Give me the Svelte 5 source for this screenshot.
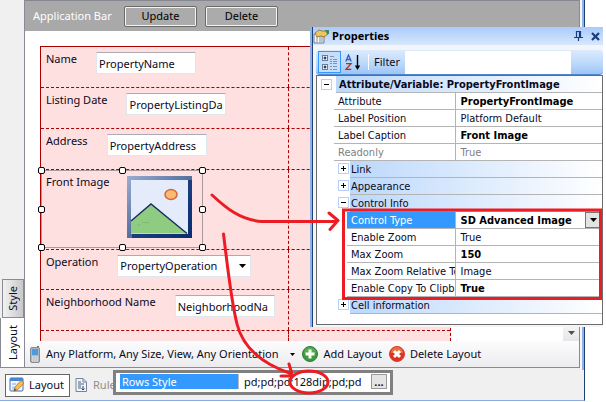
<script>
  const fields = [
    { id: 'name', label: 'Name', value: 'PropertyName' },
    { id: 'listing', label: 'Listing Date', value: 'PropertyListingDa' },
    { id: 'address', label: 'Address', value: 'PropertyAddress' }
  ];

  const general = [
    { label: 'Attribute', value: 'PropertyFrontImage', bold: true },
    { label: 'Label Position', value: 'Platform Default' },
    { label: 'Label Caption', value: 'Front Image', bold: true },
    { label: 'Readonly', value: 'True', muted: true }
  ];

  const control = [
    { label: 'Enable Zoom', value: 'True' },
    { label: 'Max Zoom', value: '150', bold: true },
    { label: 'Max Zoom Relative To', value: 'Image' },
    { label: 'Enable Copy To Clipb', value: 'True', bold: true }
  ];

  const handles = [
    [41, 170], [122, 170], [202, 170],
    [41, 209], [202, 209],
    [41, 247], [122, 247], [202, 247]
  ];
</script>

{#snippet group(title, open)}
  <tr>
    <td></td>
    <td colspan="2">
      <div class="subgroup">
        <button class="toggle" aria-label="Toggle {title}">
          <svg viewBox="0 0 9 9" width="9" height="9"><path d={open ? 'M2 4.5h5' : 'M2 4.5h5M4.5 2v5'} stroke="#000" /></svg>
        </button>
        <div class="sub-title">{title}</div>
      </div>
    </td>
  </tr>
{/snippet}

<div class="screen">
  <div class="window">
    <div class="main">
      <div class="side">
        <button class="side-tab style-tab"><span>Style</span></button>
        <button class="side-tab layout-tab"><span>Layout</span></button>
      </div>
      <div class="designer">
        <header class="appbar">
          <span>Application Bar</span>
          <button>Update</button>
          <button>Delete</button>
        </header>
        <div class="canvas">
          <div class="form">
            {#each fields as f}
              <div class="row">
                <div class="cell">
                  <label for={f.id}>{f.label}</label>
                  <input id={f.id} value={f.value} />
                </div>
                <div></div>
              </div>
            {/each}
            <div class="row image-row">
              <div class="cell">
                <span class="caption">Front Image</span>
                <svg class="picture" viewBox="0 0 65 62" width="65" height="62">
                  <defs>
                    <linearGradient id="frame" x1="0" y1="0" x2="1" y2="1">
                      <stop offset="0" stop-color="#9badd0" />
                      <stop offset=".5" stop-color="#54719f" />
                      <stop offset="1" stop-color="#012a72" />
                    </linearGradient>
                  </defs>
                  <path d="M0 0h65v62H0z" fill="url(#frame)" />
                  <path d="M61 4h4v58H5v-4h56z" fill="#0a2f73" opacity=".75" />
                  <path d="M4 4h57v54H4z" fill="#e4ecfc" />
                  <path d="M4 45 24 28 60 57.500H4z" fill="#8fcb80" />
                  <path d="M4 45 24 28 60 57.500" fill="none" stroke="#16305e" stroke-width="1.400" />
                  <path d="M10 49h4M15 46.500h7" stroke="#7dbb70" />
                  <ellipse cx="44" cy="18.500" rx="6" ry="5" fill="#fbb871" stroke="#d2653a" stroke-width="1.500" />
                </svg>
              </div>
              <div></div>
            </div>
            <div class="row op-row">
              <div class="cell">
                <label for="operation">Operation</label>
                <span class="combo">
                  <select id="operation"><option>PropertyOperation</option></select>
                  <svg viewBox="0 0 7 4" width="7" height="4"><path d="M0 0h7L3.500 4z" /></svg>
                </span>
              </div>
              <div></div>
            </div>
            <div class="row">
              <div class="cell">
                <label for="hood">Neighborhood Name</label>
                <input id="hood" value="NeighborhoodNa" />
              </div>
              <div></div>
            </div>
            <div class="row rest"><div></div><div></div></div>
          </div>
          <div class="scroll">
            <button aria-label="Scroll down">
              <svg viewBox="0 0 7 4" width="7" height="4"><path d="M0 0h7L3.500 4z" fill="#505050" /></svg>
            </button>
          </div>
        </div>
        <div class="toolbar">
          <button>
            <svg viewBox="0 0 12 17" width="12" height="17">
              <rect x="8" y="0" width="2" height="4" fill="#777" />
              <rect x="1.500" y="1.500" width="9" height="15" rx="1.500" fill="#b4b8bd" stroke="#868a91" />
              <rect x="3" y="3" width="6" height="6" fill="#4a9be0" />
              <path d="M3 11h1.500M5.300 11h1.500M7.500 11h1.500M3 13h1.500M5.300 13h1.500M7.500 13h1.500M3 15h1.500M5.300 15h1.500M7.500 15h1.500" stroke="#f4f4f4" />
            </svg>
            <span>Any Platform, Any Size, View, Any Orientation</span>
            <svg class="drop" viewBox="0 0 5 3" width="5" height="3"><path d="M0 0h5L2.500 3z" /></svg>
          </button>
          <button>
            <svg viewBox="0 0 16 16" width="16" height="16">
              <circle cx="8" cy="8" r="7.500" fill="#3d9a3f" stroke="#2b7d35" />
              <path d="M2 7a6 6 0 0 1 12 0z" fill="#67b75f" opacity=".6" />
              <path d="M8 3.500v9M3.500 8h9" stroke="#fff" stroke-width="3" />
            </svg>
            <span>Add Layout</span>
          </button>
          <button>
            <svg viewBox="0 0 16 16" width="16" height="16">
              <circle cx="8" cy="8" r="7.500" fill="#e03223" stroke="#d6402c" />
              <path d="M2 7a6 6 0 0 1 12 0z" fill="#f3874a" opacity=".7" />
              <path d="m5 5 6 6M11 5l-6 6" stroke="#fff" stroke-width="3" />
            </svg>
            <span>Delete Layout</span>
          </button>
        </div>
      </div>
      <div class="gutter"></div>
    </div>
    <footer class="tabs">
      <button class="tab active">
        <svg viewBox="0 0 16 16" width="16" height="16">
          <rect x="1" y="1" width="13" height="13" rx="1" fill="#f4f8fe" stroke="#3a6cb8" />
          <path d="M1 1h13v3H1z" fill="#4b86d6" />
          <path d="M3 6h4v2H3zM3 9.500h3v3H3zM8.500 6H12v2H8.500z" fill="#b4cdf0" />
          <path d="m5 14 1-4 6-6.500 3 2.500-6 6.500z" fill="#f8bd4e" stroke="#b3722a" stroke-width=".8" />
          <path d="m5 14 .8-2.500L7.500 13z" fill="#444" />
        </svg>
        <span>Layout</span>
      </button>
      <button class="tab rules">
        <svg viewBox="0 0 12 14" width="12" height="14">
          <path d="M1 .5h7l3.500 3.500v9.500H1z" fill="#f1f3f8" stroke="#76839e" />
          <path d="M8 .5V4h3.500" fill="none" stroke="#76839e" />
          <path d="M3 4h3M3 6h6M3 8h3M3 10h3" stroke="#4d5f85" />
          <path d="M8 8v4M6.500 10.500 8 12l1.500-1.500" fill="none" stroke="#27406e" />
        </svg>
        <span>Rule</span>
      </button>
    </footer>
  </div>

  <section class="props">
    <header class="props-head">
      <svg viewBox="0 0 16 15" width="16" height="15">
        <path d="M1 5h10v9H1z" fill="#f7f7f7" stroke="#6f7a8c" />
        <path d="M3 8h2M6 8h4M3 10h2M6 10h4M3 12h2M6 12h4" stroke="#7d8fae" />
        <path d="m2 4 4-3 3 1h4l2 3-4 3-3-1-4 1z" fill="#f0c560" stroke="#8a6a24" stroke-width=".8" />
        <path d="M12 1h4v4h-2z" fill="#3f8a58" />
      </svg>
      <h1>Properties</h1>
      <button aria-label="Pin">
        <svg viewBox="0 0 9 10" width="9" height="10"><path d="M2.500 6V.5h4V6M5.500 1v5M0 6.500h9M4.500 7v3" fill="none" stroke="#173f7d" stroke-width="1.200" /></svg>
      </button>
      <button aria-label="Close">
        <svg viewBox="0 0 9 9" width="9" height="9"><path d="m1 1 7 7M8 1 1 8" stroke="#173f7d" stroke-width="2.200" /></svg>
      </button>
    </header>
    <div class="props-tools">
      <button class="categorized" aria-label="Categorized">
        <svg viewBox="0 0 16 17" width="16" height="17">
          <rect x=".5" y="1.500" width="5" height="5" fill="#fff" stroke="#5f7faf" />
          <rect x=".5" y="10.500" width="5" height="5" fill="#fff" stroke="#5f7faf" />
          <path d="M1.500 4h3M3 2.500v3M1.500 13h3M3 11.500v3" stroke="#000" />
          <path d="M8 2.500h4M8 5.500h2M11 5.500h4M8 7.500h2M11 7.500h4M8 9.500h2M11 9.500h4M8 12.500h2M11 12.500h4M8 15.500h2M11 15.500h4" stroke="#7d93b8" />
        </svg>
      </button>
      <button class="sort" aria-label="Sort alphabetically">
        <svg viewBox="0 0 16 17" width="16" height="17">
          <path d="m.8 7.500 2.700-6.500 2.700 6.500M1.800 5.500h3.500" fill="none" stroke="#2c62b8" stroke-width="1.300" />
          <path d="M1 9.600h5L1 15.400h5.200" fill="none" stroke="#a5352b" stroke-width="1.400" />
          <path d="M12.500 1v13" stroke="#000" stroke-width="1.400" />
          <path d="M9.800 11.500h5.400L12.500 16z" />
        </svg>
      </button>
      <label for="filter">Filter</label>
      <input id="filter" />
    </div>
    <div class="sheet">
      <table>
        <colgroup><col class="c-gutter" /><col class="c-label" /><col /></colgroup>
        <tbody>
          <tr>
            <td>
              <button class="toggle top" aria-label="Toggle attribute group">
                <svg viewBox="0 0 9 9" width="9" height="9"><path d="M2 4.500h5" stroke="#000" /></svg>
              </button>
            </td>
            <td colspan="2"><div class="title">Attribute/Variable: PropertyFrontImage</div></td>
          </tr>
          {#each general as r}
            <tr class:muted={r.muted}>
              <td></td>
              <td class="label"><div>{r.label}</div></td>
              <td class="value" class:bold={r.bold}><div>{r.value}</div></td>
            </tr>
          {/each}
          {@render group('Link', false)}
          {@render group('Appearance', false)}
          {@render group('Control Info', true)}
          <tr class="selected">
            <td></td>
            <td class="label nested"><div><label for="ctype">Control Type</label></div></td>
            <td class="value bold">
              <div class="pick">
                <select id="ctype"><option>SD Advanced Image</option></select>
                <span class="pick-arrow"><svg viewBox="0 0 7 4" width="7" height="4"><path d="M0 0h7L3.500 4z" /></svg></span>
              </div>
            </td>
          </tr>
          {#each control as r}
            <tr>
              <td></td>
              <td class="label nested"><div>{r.label}</div></td>
              <td class="value" class:bold={r.bold}><div>{r.value}</div></td>
            </tr>
          {/each}
          {@render group('Cell information', false)}
        </tbody>
      </table>
    </div>
  </section>

  <div class="rows-style">
    <label for="rows">Rows Style</label>
    <input id="rows" value="pd;pd;pd;128dip;pd;pd" />
    <button aria-label="Edit rows style">...</button>
  </div>

  <svg class="marks" viewBox="0 0 606 402" width="606" height="402">
    <rect x="41.500" y="170.500" width="161" height="77" fill="none" stroke="#555" stroke-dasharray="1 1" />
    {#each handles as [x, y]}
      <rect x={x - 2.5} y={y - 2.5} width="6" height="6" rx="1.500" fill="#fff" stroke="#000" />
    {/each}
    <g fill="none" stroke="#ed1c24" stroke-width="3" stroke-linecap="round" stroke-linejoin="round">
      <path d="M212 195C226 208 240 220 262 221.500H337M329 213l9 7.500-8 9" />
      <rect x="343.500" y="210" width="257" height="88.500" stroke-linejoin="miter" />
      <path d="M223.500 234C228 270 231 300 237 324C244 352 268 366 292 374M289 364l3 10M281 376h11" />
      <ellipse cx="309" cy="382" rx="19" ry="11" />
    </g>
  </svg>
</div>

<style>
  :global(body) { margin: 0; background: #fff; }
  .screen {
    position: relative;
    min-height: 402px;
    font: 11px/16px "Noto Sans", "Open Sans", sans-serif;
    color: #0a0a1e;
    overflow: hidden;
  }
  .screen * { box-sizing: border-box; }
  button, input, select { font: inherit; color: inherit; margin: 0; padding: 0; border: 0; background: none; border-radius: 0; outline: 0; }
  svg { display: block; flex: none; }

  .window {
    display: flex;
    flex-direction: column;
    min-height: 401px;
    margin-right: 21px;
    border-right: 1px solid #1f3f77;
    border-bottom: 1px solid #8aaee0;
    background: #f0f0f0;
  }
  .main { flex: 1; display: flex; }
  .gutter { width: 4px; border-right: 2px solid #8fb3e6; background: #f6f6f6; }
  .side { width: 24px; display: flex; flex-direction: column; justify-content: flex-end; padding-bottom: 2px; }
  .side-tab { display: flex; align-items: center; justify-content: center; border: 1px solid #8a8a94; }
  .side-tab span { writing-mode: vertical-rl; transform: rotate(180deg); }
  .style-tab { height: 39px; margin-left: 2px; background: linear-gradient(90deg, #f2f2f2, #c8c8cc); }
  .layout-tab { height: 50px; background: #fff; border-top: 0; border-right: 0; }

  .designer { flex: 1; min-width: 0; display: flex; flex-direction: column; border-left: 1px solid #8a8a94; border-right: 1px solid #8a8a94; background: #fff; margin-bottom: 2px; border-bottom: 1px solid #8a8a94; }
  .appbar { height: 31px; display: flex; align-items: center; gap: 8px; padding-left: 8px; background: #a9a9a9; border-top: 1px solid #858892; color: #fff; }
  .appbar span { width: 83px; white-space: nowrap; }
  .appbar button { width: 73px; height: 21px; border: 1px solid #6a6a6a; border-radius: 2px; box-shadow: inset 0 0 0 1px #f4f4f4; background: #ababab; color: #000; }

  .canvas { flex: 1; display: flex; padding: 15px 0 0 15px; }
  .form { flex: 1; margin-right: 112px; display: flex; flex-direction: column; background: #ffe0e0; border: 1px solid #a80000; border-bottom: 0; border-right-style: dashed; }
  .row { display: grid; grid-template-columns: 248px 1fr; height: 41px; border-bottom: 1px dashed #a80000; }
  .row > div:first-child { border-right: 1px dashed #a80000; }
  .image-row { height: 80px; }
  .op-row { height: 40px; }
  .rest { flex: 1; height: auto; border-bottom: 0; }
  .cell { display: flex; align-items: flex-start; gap: 19px; padding: 5px; }
  .cell label, .caption { white-space: nowrap; line-height: 14px; }
  .cell input, .combo select { width: 100px; height: 22px; padding: 0 2px; background: #fff; border: 1px solid #dfe6ee; border-top-color: #ababb3; border-radius: 1px; }
  .combo { display: grid; align-items: center; justify-items: end; }
  .combo > * { grid-area: 1 / 1; }
  .combo select { width: 134px; appearance: none; }
  .combo svg { margin-right: 5px; pointer-events: none; }
  .picture { margin-top: 1px; }
  .caption { width: 62px; }

  .scroll { width: 16px; display: flex; align-items: flex-end; }
  .scroll button { width: 16px; height: 17px; display: grid; place-items: center; background: linear-gradient(#f6f6f6, #e6e6e8); }

  .toolbar { height: 26px; display: flex; align-items: center; gap: 7px; padding-left: 4px; background: linear-gradient(#fcfcfd, #ececef); }
  .toolbar button { display: flex; align-items: center; gap: 5px; white-space: nowrap; }
  .drop { margin-left: 7px; }

  .tabs { display: flex; align-items: center; height: 30px; padding-left: 5px; gap: 5px; }
  .tab { height: 23px; display: flex; align-items: center; gap: 4px; padding: 0 3px; white-space: nowrap; }
  .tab.active { width: 65px; background: #fff; border: 1px solid #666; }
  .rules { color: #8e8e8e; gap: 6px; padding: 0; }

  .props {
    position: absolute;
    left: 310px;
    right: 3px;
    top: 27px;
    height: 300px;
    padding: 0 0 2px 3px;
    border-left: 2px solid #8fb3e6;
    box-shadow: inset 1px 0 #1f3f77;
    background: #f3f5f9;
    font: 11px/16px "DejaVu Sans Condensed", "DejaVu Sans", sans-serif;
    display: flex;
    flex-direction: column;
  }
  .props-head { height: 18px; display: flex; align-items: center; gap: 3px; margin-left: -2px; padding-right: 3px; background: linear-gradient(#a9cbfb, #d8e8fd); }
  .props-head h1 { flex: 1; margin: 0; font: bold 11px/16px "Open Sans", sans-serif; color: #000; }
  .props-head button { margin-left: 5px; }
  .props-tools { height: 25px; margin: 5px 0 0 1px; display: flex; align-items: center; border-radius: 4px; border-bottom: 1px solid #4f86cf; background: linear-gradient(#dcebfe, #b9d7fa 60%, #9cc4f5); }
  .props-tools label { font: 11px/16px "Noto Sans", sans-serif; border-left: 1px solid #fff; padding: 0 5px; margin-left: 7px; }
  .props-tools input { flex: 1; min-width: 0; height: 23px; margin-right: 32px; background: #fff; }
  .categorized { width: 23px; height: 22px; margin-left: 2px; display: grid; place-items: center; border: 1px solid #3399ff; background: #c6defa; }
  .sort { margin-left: 4px; }

  .sheet { flex: 1; margin-left: 1px; border: 1px solid #6b6b6b; background: #fff; overflow: hidden; }
  table { width: 100%; table-layout: fixed; border-collapse: collapse; }
  .c-gutter { width: 17px; }
  .c-label { width: 121px; }
  td { padding: 0; height: 17px; line-height: 18px; vertical-align: top; white-space: nowrap; overflow: hidden; }
  td > div { height: 17px; border-bottom: 1px solid #b4b4b4; overflow: hidden; }
  td .title { margin-left: 2px; padding-left: 3px; font-weight: bold; background: linear-gradient(90deg, #bcd8fb, #fff); }
  .label { border-right: 1px solid #b4b4b4; }
  .label div { padding-left: 4px; }
  .nested div { margin-left: 13px; }
  .value div { padding-left: 5px; }
  .bold { font-weight: bold; color: #000; }
  .muted { color: #808080; }
  .selected .label div { background: #3399ff; color: #fff; }
  .toggle { width: 9px; height: 9px; flex: none; background: #fff; box-shadow: 0 0 0 1px #b5d2f5; }
  .toggle.top { display: block; margin: 4px 0 0 5px; }
  td .subgroup { display: flex; align-items: flex-start; gap: 2px; padding-left: 5px; border: 0; }
  .subgroup .toggle { margin-top: 3px; }
  .sub-title { flex: 1; height: 17px; padding-left: 1px; border-bottom: 1px solid #b4b4b4; background: linear-gradient(90deg, #bcd8fb, #fff); }
  .pick { display: flex; }
  .pick select { flex: 1; min-width: 0; appearance: none; line-height: 18px; }
  .pick-arrow { width: 17px; display: grid; place-items: center; background: #e3e3e3; border: 1px solid #777; }

  .rows-style { position: absolute; left: 113px; top: 370px; width: 280px; height: 25px; display: flex; padding: 1px 3px 3px 4px; border: 3px solid #808080; background: #fff; line-height: 15px; }
  .rows-style label { width: 119px; padding-left: 2px; background: #3399ff; color: #fff; border-right: 1px solid #bbb; }
  .rows-style input { flex: 1; min-width: 0; padding-left: 5px; height: 15px; }
  .rows-style button { width: 16px; height: 15px; background: #e4e4e4; border: 1px solid #999; line-height: 8px; font-weight: bold; }
  .marks { position: absolute; left: 0; top: 0; pointer-events: none; }
</style>
